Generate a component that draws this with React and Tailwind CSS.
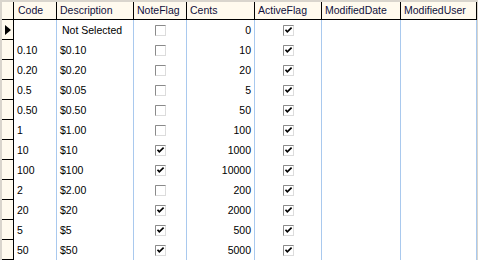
const COLS = [
  { key: 'code', label: 'Code', w: 'w-[43px]' },
  { key: 'desc', label: 'Description', w: 'w-[77px]' },
  { key: 'note', label: 'NoteFlag', w: 'w-[53px]' },
  { key: 'cents', label: 'Cents', w: 'w-[68px]' },
  { key: 'active', label: 'ActiveFlag', w: 'w-[67px]' },
  { key: 'date', label: 'ModifiedDate', w: 'w-[79px]' },
  { key: 'user', label: 'ModifiedUser', w: 'w-[76px]' },
]

const ROWS = [
  ['', 'Not Selected', false, 0, true],
  ['0.10', '$0.10', false, 10, true],
  ['0.20', '$0.20', false, 20, true],
  ['0.5', '$0.05', false, 5, true],
  ['0.50', '$0.50', false, 50, true],
  ['1', '$1.00', false, 100, true],
  ['10', '$10', true, 1000, true],
  ['100', '$100', true, 10000, true],
  ['2', '$2.00', false, 200, true],
  ['20', '$20', true, 2000, true],
  ['5', '$5', true, 500, true],
  ['50', '$50', true, 5000, true],
]

function Check({ on }) {
  return (
    <svg width="11" height="11" viewBox="0 0 11 11">
      <rect x="0" y="0" width="11" height="11" fill="#dcdcdc" />
      <path d="M0.5 10.5 V0.5 H10.5" fill="none" stroke="#8a8a8a" />
      <rect x="1" y="1" width="9" height="9" fill="#ffffff" />
      {on && <path d="M2.5 4.8 L4.3 6.8 L8.6 2.6" fill="none" stroke="#000" strokeWidth="1.7" />}
    </svg>
  )
}

export default function App() {
  return (
    <div
      className="w-[478px] h-[260px] overflow-hidden bg-[#d9d5cd] pt-[2px] pl-[2px] text-[10.5px] leading-none"
      style={{ fontFamily: '"Liberation Sans", Arial, sans-serif' }}
    >
      <div className="bg-white w-[475px] h-[258px]">
        <div className="flex h-[18px] bg-[#fffaee] border-b border-black text-[#10103c]">
          <div className="w-[12px] border-r border-black" />
          {COLS.map((c) => (
            <div key={c.key} className={`${c.w} border-r border-black flex items-center px-[3px] ${c.key === 'code' ? 'pl-[4px]' : ''}`}>
              {c.label}
            </div>
          ))}
        </div>

        {ROWS.map((r, i) => (
          <div key={i} className="flex h-[20px] text-black">
            <div className="w-[12px] bg-[#fffaee] border-r border-b border-black flex items-center justify-center">
              {i === 0 && (
                <svg width="6" height="10" viewBox="0 0 6 10">
                  <path d="M0 0 L6 5 L0 10 Z" fill="#000" />
                </svg>
              )}
            </div>
            <div className="w-[43px] border-r border-[#a9c9ee] flex items-center pl-[3px]">{r[0]}</div>
            <div className={`w-[77px] border-r border-[#a9c9ee] flex items-center pl-[3px] ${i === 0 ? 'pl-[5px]' : ''}`}>{r[1]}</div>
            <div className="w-[53px] border-r border-[#a9c9ee] flex items-center justify-center">
              <Check on={r[2]} />
            </div>
            <div className="w-[68px] border-r border-[#a9c9ee] flex items-center justify-end pr-[3px]">{r[3]}</div>
            <div className="w-[67px] border-r border-[#a9c9ee] flex items-center justify-center">
              <Check on={r[4]} />
            </div>
            <div className="w-[79px] border-r border-[#a9c9ee]" />
            <div className="w-[76px] border-r border-[#a9c9ee]" />
          </div>
        ))}
      </div>
    </div>
  )
}
